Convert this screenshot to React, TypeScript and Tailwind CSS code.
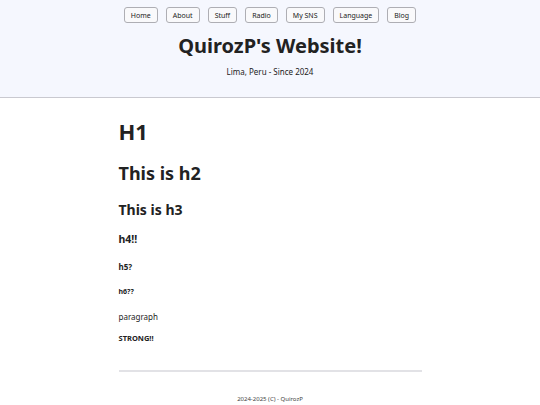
import * as React from "react";

const navItems = ["Home", "About", "Stuff", "Radio", "My SNS", "Language", "Blog"];

const App: React.FC = () => {
  return (
    <div className="min-h-[405px] bg-white text-[#222] font-['Noto_Sans',sans-serif]">
      <header className="bg-[#f5f7fe] border-b border-[#c9c9d0] pt-[7px] pb-[21px] flex flex-col items-center">
        <nav className="flex gap-[8px]">
          {navItems.map((item) => (
            <button
              key={item}
              className="h-[16px] px-[6px] text-[7px] leading-none bg-[#f9f9fb] border border-[#aeaeb4] rounded-[3px] text-[#222]"
            >
              {item}
            </button>
          ))}
        </nav>
        <h1 className="mt-[13px] text-[20px] font-bold leading-none">QuirozP's Website!</h1>
        <div className="mt-[12px] text-[8px] leading-none">Lima, Peru - Since 2024</div>
      </header>

      <main className="w-[303px] mx-auto pt-[22px]">
        <h1 className="text-[22px] font-bold leading-none">H1</h1>
        <h2 className="mt-[22px] text-[18px] font-bold leading-none">This is h2</h2>
        <h3 className="mt-[21px] text-[14px] font-bold leading-none">This is h3</h3>
        <h4 className="mt-[17px] text-[10.5px] font-bold leading-none">h4!!</h4>
        <h5 className="mt-[18px] text-[8px] font-bold leading-none">h5?</h5>
        <h6 className="mt-[17px] text-[7px] font-bold leading-none">h6??</h6>
        <p className="mt-[18px] text-[8px] leading-none">paragraph</p>
        <strong className="block mt-[14px] text-[7.5px] font-bold leading-none">STRONG!!</strong>
        <hr className="mt-[28px] border-t-[2px] border-[#e2e2e6]" />
      </main>

      <footer className="mt-[24px] text-center text-[6px] text-[#444] leading-none">
        2024-2025 (C) - QuirozP
      </footer>
    </div>
  );
};

export default App;
